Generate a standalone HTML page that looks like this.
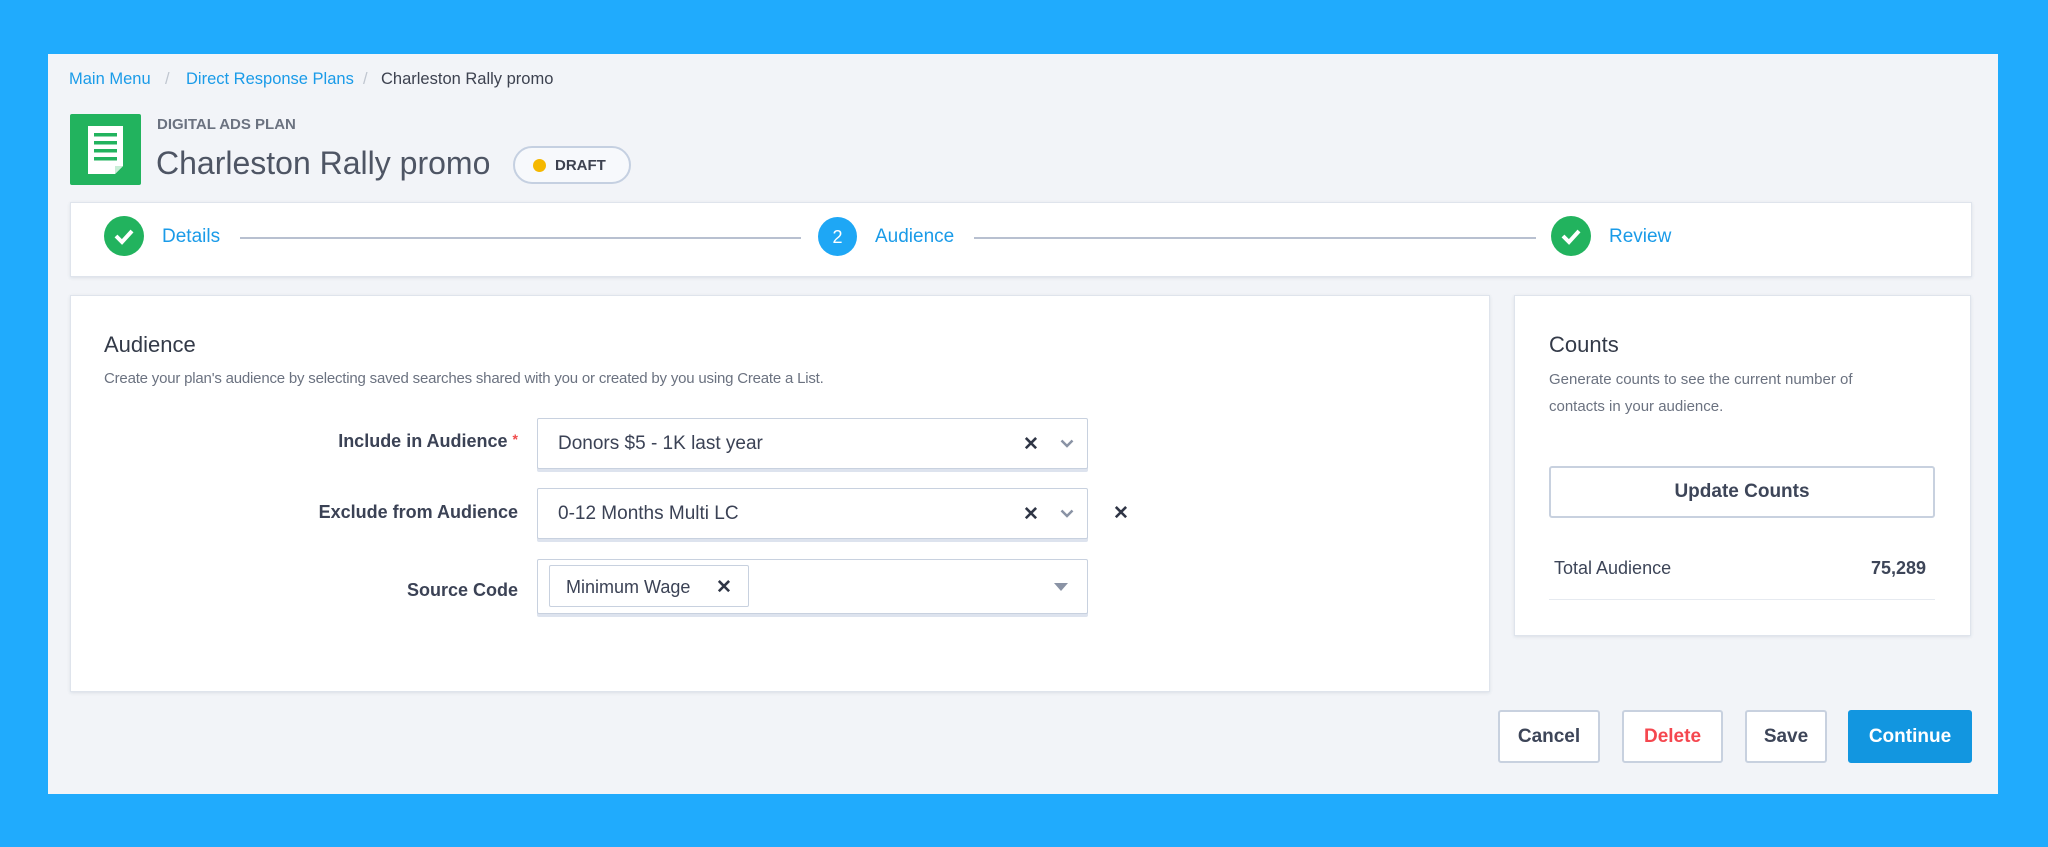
<!DOCTYPE html>
<html><head><meta charset="utf-8"><style>
*{box-sizing:border-box;margin:0;padding:0}
body{width:2048px;height:847px;background:#20abfd;font-family:"Liberation Sans",sans-serif;position:relative;overflow:hidden}
.abs{position:absolute}
#panel{left:48px;top:54px;width:1950px;height:740px;background:#f2f4f8}
.card{background:#fff;border:1px solid #dfe4ec;box-shadow:0 1px 3px rgba(60,80,110,.12)}
.bc{top:70px;font-size:16.5px;color:#1a9be8}
.lbl{font-weight:bold;font-size:18px;color:#3b4255;text-align:right;width:400px;left:118px}
.inp{left:537px;width:551px;background:#fff;border:1px solid #c8d1df;box-shadow:0 3px 0 #dde3ee;border-radius:2px}
.inp .t{position:absolute;left:20px;font-size:19px;color:#3b4255}
.btn{top:710px;height:53px;background:#fff;border:2px solid #c8d1df;border-radius:3px;font-weight:bold;font-size:19px;color:#3d4558;display:flex;align-items:center;justify-content:center}
.x{font-weight:bold;font-size:19px;color:#2f3545}
</style></head><body>
<div id="panel" class="abs"></div>
<div class="abs bc" style="left:69px">Main Menu</div>
<div class="abs bc" style="left:165px;color:#c0c6d0">/</div>
<div class="abs bc" style="left:186px">Direct Response Plans</div>
<div class="abs bc" style="left:363px;color:#c0c6d0">/</div>
<div class="abs bc" style="left:381px;color:#3d4250">Charleston Rally promo</div>

<div class="abs" style="left:70px;top:114px;width:71px;height:71px;background:#22b35e;border-radius:2px">
<svg width="71" height="71" viewBox="0 0 71 71"><path d="M18 12h35v40l-8 8H18z" fill="#fff"/><path d="M45 60v-8h8z" fill="#c8eed6"/><rect x="24" y="19" width="23" height="3.5" fill="#22b35e"/><rect x="24" y="27" width="23" height="3.5" fill="#22b35e"/><rect x="24" y="35" width="23" height="3.5" fill="#22b35e"/><rect x="24" y="43" width="23" height="3.5" fill="#22b35e"/></svg></div>
<div class="abs" style="left:157px;top:116px;font-size:15px;font-weight:bold;color:#6b7280">DIGITAL ADS PLAN</div>
<div class="abs" style="left:156px;top:145px;font-size:32px;color:#4e5564">Charleston Rally promo</div>
<div class="abs" style="left:513px;top:146px;width:118px;height:38px;border:2px solid #c5d0e1;border-radius:19px;background:#f7f9fc"><span class="abs" style="left:18px;top:11px;width:13px;height:13px;border-radius:50%;background:#f5b800"></span><span class="abs" style="left:40px;top:9px;font-size:15px;font-weight:bold;color:#3d4250">DRAFT</span></div>

<div class="abs card" style="left:70px;top:202px;width:1902px;height:75px"></div>
<svg class="abs" style="left:104px;top:216px" width="40" height="40"><circle cx="20" cy="20" r="20" fill="#22b35e"/><path d="M12 20l6 6 10-11" stroke="#fff" stroke-width="4" fill="none"/></svg>
<div class="abs" style="left:162px;top:226px;font-size:19px;color:#1a9be8">Details</div>
<div class="abs" style="left:240px;top:237px;width:561px;height:1.5px;background:#b8c0d0"></div>
<svg class="abs" style="left:818px;top:217px" width="39" height="39"><circle cx="19.5" cy="19.5" r="19.5" fill="#1ea7f5"/><text x="19.5" y="26" font-family="Liberation Sans" font-size="18" fill="#fff" text-anchor="middle">2</text></svg>
<div class="abs" style="left:875px;top:226px;font-size:19px;color:#1a9be8">Audience</div>
<div class="abs" style="left:974px;top:237px;width:562px;height:1.5px;background:#b8c0d0"></div>
<svg class="abs" style="left:1551px;top:216px" width="40" height="40"><circle cx="20" cy="20" r="20" fill="#22b35e"/><path d="M12 20l6 6 10-11" stroke="#fff" stroke-width="4" fill="none"/></svg>
<div class="abs" style="left:1609px;top:226px;font-size:19px;color:#1a9be8">Review</div>

<div class="abs card" style="left:70px;top:295px;width:1420px;height:397px"></div>
<div class="abs" style="left:104px;top:332px;font-size:22px;color:#333a48">Audience</div>
<div class="abs" style="left:104px;top:370px;font-size:15px;color:#6b7280;letter-spacing:-.2px">Create your plan's audience by selecting saved searches shared with you or created by you using Create a List.</div>

<div class="abs lbl" style="top:431px">Include in Audience <span style="color:#f04b4b;font-size:14px;vertical-align:top">*</span></div>
<div class="abs inp" style="top:418px;height:51px"><span class="t" style="top:14px">Donors $5 - 1K last year</span><span class="abs x" style="left:485px;top:14px">✕</span><svg class="abs" style="left:522px;top:20px" width="14" height="9"><path d="M1.5 1.5L7 7l5.5-5.5" stroke="#8a93a5" stroke-width="2.5" fill="none"/></svg></div>
<div class="abs lbl" style="top:502px">Exclude from Audience</div>
<div class="abs inp" style="top:488px;height:51px"><span class="t" style="top:14px">0-12 Months Multi LC</span><span class="abs x" style="left:485px;top:14px">✕</span><svg class="abs" style="left:522px;top:20px" width="14" height="9"><path d="M1.5 1.5L7 7l5.5-5.5" stroke="#8a93a5" stroke-width="2.5" fill="none"/></svg></div>
<div class="abs x" style="left:1113px;top:502px">✕</div>
<div class="abs lbl" style="top:580px">Source Code</div>
<div class="abs inp" style="top:559px;height:55px"><div class="abs" style="left:11px;top:5px;width:200px;height:42px;border:1px solid #c8d1df;border-radius:2px"><span class="abs" style="left:16px;top:11px;font-size:18px;color:#3b4255">Minimum Wage</span><span class="abs x" style="left:166px;top:10px">✕</span></div><svg class="abs" style="left:516px;top:23px" width="14" height="8"><path d="M0 0h14L7 8z" fill="#8a93a5"/></svg></div>

<div class="abs card" style="left:1514px;top:295px;width:457px;height:341px"></div>
<div class="abs" style="left:1549px;top:332px;font-size:22px;color:#333a48">Counts</div>
<div class="abs" style="left:1549px;top:366px;font-size:15px;color:#6b7280;line-height:27px;width:360px">Generate counts to see the current number of contacts in your audience.</div>
<div class="abs btn" style="left:1549px;top:466px;width:386px;height:52px;font-size:19px">Update Counts</div>
<div class="abs" style="left:1554px;top:558px;font-size:18px;color:#3d4558">Total Audience</div>
<div class="abs" style="left:1826px;top:558px;width:100px;text-align:right;font-size:18px;font-weight:bold;color:#3d4558">75,289</div>
<div class="abs" style="left:1549px;top:599px;width:386px;height:1px;background:#e6eaf0"></div>

<div class="abs btn" style="left:1498px;width:102px">Cancel</div>
<div class="abs btn" style="left:1622px;width:101px;color:#f5474f">Delete</div>
<div class="abs btn" style="left:1745px;width:82px">Save</div>
<div class="abs btn" style="left:1848px;width:124px;background:#1296e0;border-color:#1296e0;color:#fff">Continue</div>
</body></html>
